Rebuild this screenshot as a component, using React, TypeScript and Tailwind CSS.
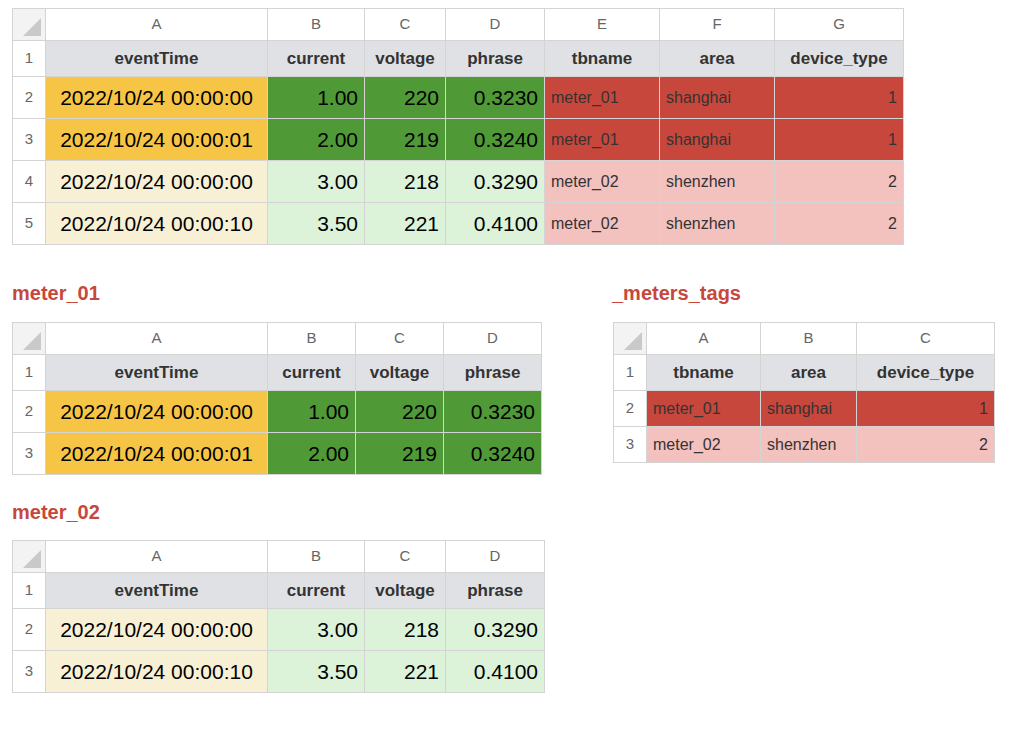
import React from "react";

type Cell = { t: string; bg: string; align?: "l" | "r" | "c"; small?: boolean };
type Col = { letter: string; w: string; head: string };

const OR = "bg-[#f7c545]", DG = "bg-[#4f9a37]", LG = "bg-[#dcf3da]", LY = "bg-[#f8f0d5]", RD = "bg-[#c8473c]", PK = "bg-[#f3c1be]";

function Table({ cols, rows, rowH, bodyText }: { cols: Col[]; rows: Cell[][]; rowH: string; bodyText: string }) {
  const b = "border-r border-b border-[#d4d4d4]";
  return (
    <div className="inline-flex flex-col border-l border-t border-[#d4d4d4]">
      <div className="flex h-[32px]">
        <div className={`w-[33px] bg-[#f3f3f3] ${b} relative`}>
          <div className="absolute right-[4px] bottom-[4px] w-0 h-0 border-l-[18px] border-l-transparent border-b-[18px] border-b-[#c9c9c9]" />
        </div>
        {cols.map((c) => (
          <div key={c.letter} className={`${c.w} ${b} flex items-center justify-center text-[15px] text-[#666]`}>{c.letter}</div>
        ))}
      </div>
      <div className="flex h-[36px]">
        <div className={`w-[33px] ${b} flex items-center justify-center text-[15px] text-[#666]`}>1</div>
        {cols.map((c) => (
          <div key={c.letter} className={`${c.w} ${b} bg-[#e0e1e5] flex items-center justify-center text-[17px] font-bold text-[#333]`}>{c.head}</div>
        ))}
      </div>
      {rows.map((r, i) => (
        <div key={i} className={`flex ${rowH}`}>
          <div className={`w-[33px] ${b} flex items-center justify-center text-[15px] text-[#666]`}>{i + 2}</div>
          {r.map((c, j) => (
            <div key={j} className={`${cols[j].w} ${c.bg} ${b} flex items-center px-[6px] ${c.align === "r" ? "justify-end" : c.align === "c" ? "justify-center" : "justify-start"} ${c.small ? "text-[16px] text-[#333]" : bodyText + " text-black"}`}>{c.t}</div>
          ))}
        </div>
      ))}
    </div>
  );
}

const mainCols: Col[] = [
  { letter: "A", w: "w-[222px]", head: "eventTime" },
  { letter: "B", w: "w-[97px]", head: "current" },
  { letter: "C", w: "w-[81px]", head: "voltage" },
  { letter: "D", w: "w-[99px]", head: "phrase" },
];
const m1Cols: Col[] = [
  { letter: "A", w: "w-[222px]", head: "eventTime" },
  { letter: "B", w: "w-[88px]", head: "current" },
  { letter: "C", w: "w-[88px]", head: "voltage" },
  { letter: "D", w: "w-[98px]", head: "phrase" },
];

const d1 = (t: string, v: string, vo: string, p: string, tb: Cell, a: string): Cell[] => [
  { t, bg: a === "1" ? OR : LY, align: "c" },
  { t: v, bg: a === "1" ? DG : LG, align: "r" },
  { t: vo, bg: a === "1" ? DG : LG, align: "r" },
  { t: p, bg: a === "1" ? DG : LG, align: "r" },
];

const r1 = d1("2022/10/24 00:00:00", "1.00", "220", "0.3230", {} as Cell, "1");
const r2 = d1("2022/10/24 00:00:01", "2.00", "219", "0.3240", {} as Cell, "1");
const r3 = d1("2022/10/24 00:00:00", "3.00", "218", "0.3290", {} as Cell, "2");
const r4 = d1("2022/10/24 00:00:10", "3.50", "221", "0.4100", {} as Cell, "2");
const tag = (n: string, a: string, d: string, bg: string): Cell[] => [
  { t: n, bg, small: true },
  { t: a, bg, small: true },
  { t: d, bg, align: "r", small: true },
];

export default function App() {
  const font = { fontFamily: '"Liberation Sans", Arial, sans-serif' };
  return (
    <div className="w-[1024px] h-[736px] bg-white relative" style={font}>
      <div className="pl-[12px] pt-[8px]">
        <Table
          cols={[...mainCols, { letter: "E", w: "w-[115px]", head: "tbname" }, { letter: "F", w: "w-[115px]", head: "area" }, { letter: "G", w: "w-[129px]", head: "device_type" }]}
          rows={[
            [...r1, ...tag("meter_01", "shanghai", "1", RD)],
            [...r2, ...tag("meter_01", "shanghai", "1", RD)],
            [...r3, ...tag("meter_02", "shenzhen", "2", PK)],
            [...r4, ...tag("meter_02", "shenzhen", "2", PK)],
          ]}
          rowH="h-[42px]"
          bodyText="text-[21px]"
        />
        <div className="flex mt-[36px]">
          <div className="w-[600px]">
            <div className="text-[20px] font-bold text-[#c8473c] h-[24px] leading-[24px]">meter_01</div>
            <div className="mt-[17px]">
              <Table cols={m1Cols} rows={[r1, r2]} rowH="h-[42px]" bodyText="text-[21px]" />
            </div>
            <div className="text-[20px] font-bold text-[#c8473c] mt-[25px] h-[24px] leading-[24px]">meter_02</div>
            <div className="mt-[16px]">
              <Table cols={mainCols} rows={[r3, r4]} rowH="h-[42px]" bodyText="text-[21px]" />
            </div>
          </div>
          <div>
            <div className="text-[20px] font-bold text-[#c8473c] h-[24px] leading-[24px]">_meters_tags</div>
            <div className="mt-[17px] ml-[1px]">
              <Table
                cols={[{ letter: "A", w: "w-[114px]", head: "tbname" }, { letter: "B", w: "w-[96px]", head: "area" }, { letter: "C", w: "w-[138px]", head: "device_type" }]}
                rows={[tag("meter_01", "shanghai", "1", RD), tag("meter_02", "shenzhen", "2", PK)]}
                rowH="h-[36px]"
                bodyText="text-[16px]"
              />
            </div>
          </div>
        </div>
      </div>
    </div>
  );
}
